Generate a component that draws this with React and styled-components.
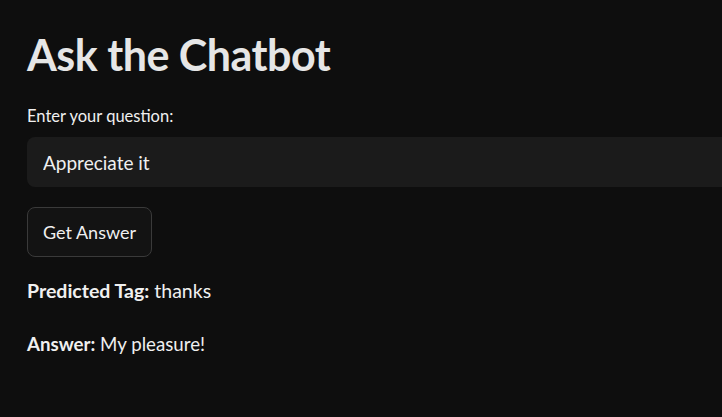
import React, { useState } from 'react';
import styled, { createGlobalStyle } from 'styled-components';

const GlobalStyle = createGlobalStyle`
  html, body {
    margin: 0;
    padding: 0;
    background: #0e0e0e;
    overflow: hidden;
  }
  body {
    font-family: 'Lato', 'Noto Sans', sans-serif;
    color: #fafafa;
  }
`;

const Page = styled.div`
  width: 722px;
  height: 417px;
  background: #0e0e0e;
  overflow: hidden;
`;

const Main = styled.div`
  padding: 24px 0 0 27px;
  width: 760px;
  display: flex;
  flex-direction: column;
`;

const Title = styled.h1`
  margin: 0;
  font-size: 43px;
  font-weight: 700;
  line-height: 62px;
  color: #e6e6e6;
  letter-spacing: -0.5px;
`;

const Label = styled.label`
  margin-top: 20px;
  font-size: 16.5px;
  line-height: 20px;
  color: #f0f0f0;
`;

const Input = styled.input`
  margin-top: 11px;
  height: 50px;
  box-sizing: border-box;
  border: none;
  outline: none;
  border-radius: 8px;
  background: #1b1b1b;
  color: #f0f0f0;
  font-family: inherit;
  font-size: 19px;
  padding: 0 16px;
`;

const Button = styled.button`
  align-self: flex-start;
  margin-top: 20px;
  height: 50px;
  padding: 0 15px;
  box-sizing: border-box;
  border: 1px solid #3a3a3a;
  border-radius: 8px;
  background: #131313;
  color: #f0f0f0;
  font-family: inherit;
  font-size: 18px;
  cursor: pointer;
`;

const Line = styled.p`
  margin: ${props => props.first ? '19px' : '23px'} 0 0;
  font-size: ${props => props.first ? '19.5px' : '18.7px'};
  line-height: 30px;
  color: #f0f0f0;
`;

const Strong = styled.strong`
  font-weight: 700;
`;

export default function App() {
  const [question, setQuestion] = useState('Appreciate it');
  return (
    <Page>
      <GlobalStyle />
      <Main>
        <Title>Ask the Chatbot</Title>
        <Label>Enter your question:</Label>
        <Input value={question} onChange={e => setQuestion(e.target.value)} />
        <Button>Get Answer</Button>
        <Line first><Strong>Predicted Tag:</Strong> thanks</Line>
        <Line><Strong>Answer:</Strong> My pleasure!</Line>
      </Main>
    </Page>
  );
}
